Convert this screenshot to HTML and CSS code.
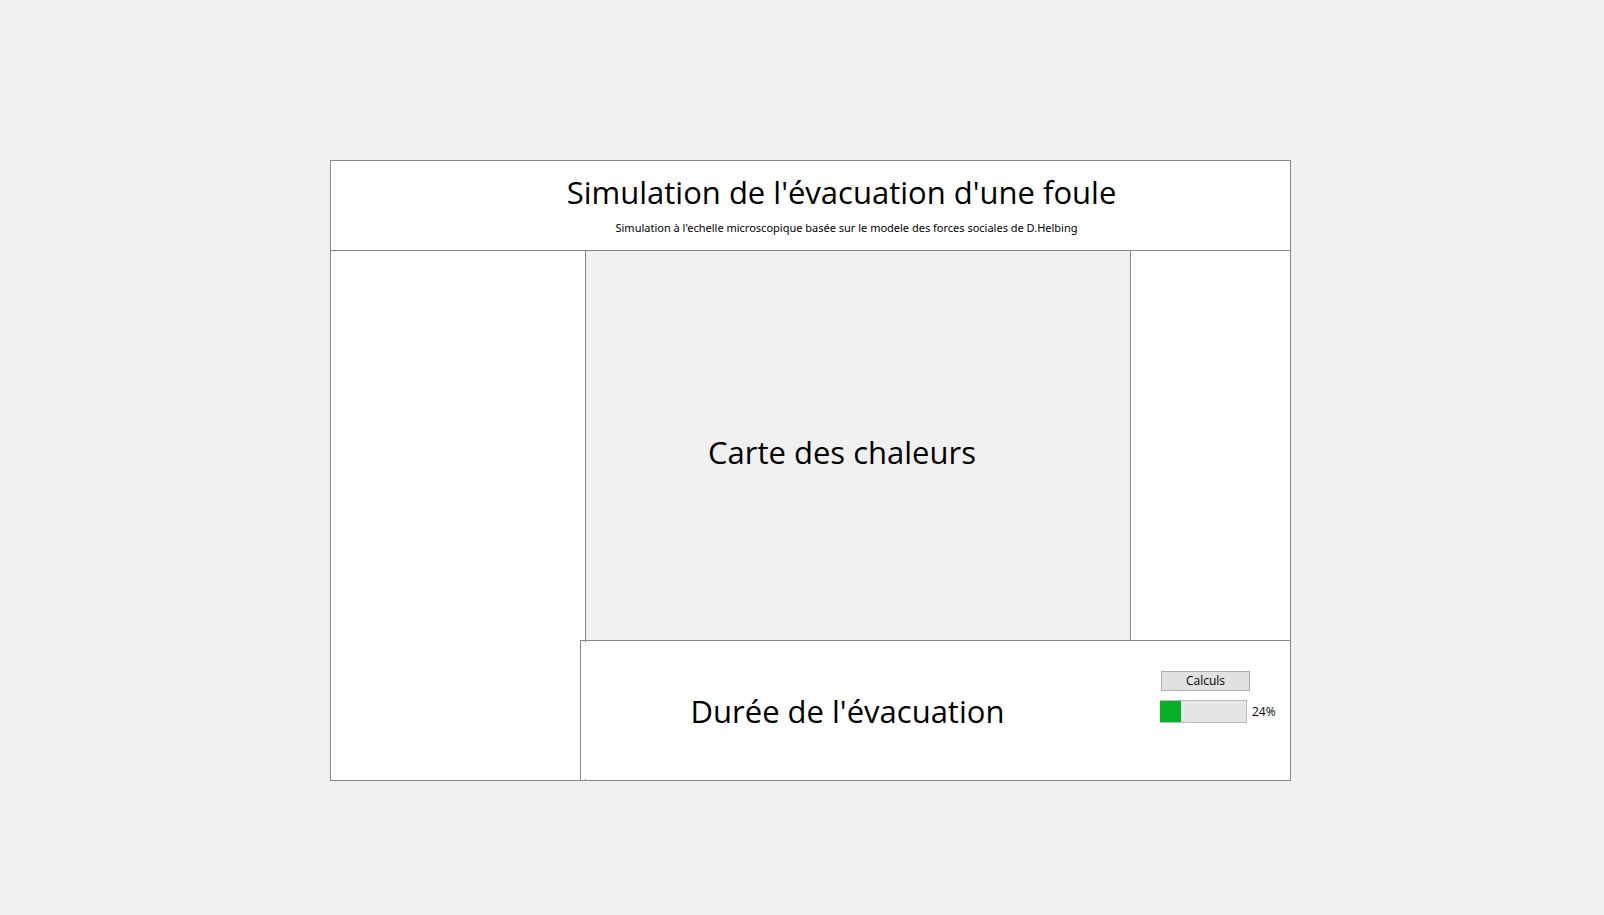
FILE: index.html
```html
<!DOCTYPE html>
<html lang="fr">
<head>
<meta charset="utf-8">
<title>Simulation de l'évacuation d'une foule</title>
<link rel="stylesheet" href="styles.css">
</head>
<body>
<main class="board">
  <header class="intro">
    <h1 class="title">Simulation de l'évacuation d'une foule</h1>
    <p class="subtitle">Simulation à l'echelle microscopique basée sur le modele des forces sociales de D.Helbing</p>
  </header>
  <aside class="side-left"></aside>
  <section class="map">
    <h2 class="title">Carte des chaleurs</h2>
  </section>
  <aside class="side-right"></aside>
  <section class="duration">
    <div class="duration-inner">
      <h2 class="title">Durée de l'évacuation</h2>
      <div class="controls">
        <button class="run" type="button">Calculs</button>
        <div class="meter">
          <progress class="bar" id="bar" value="24" max="100"></progress>
          <label class="percent" for="bar">24%</label>
        </div>
      </div>
    </div>
  </section>
</main>
</body>
</html>
```
FILE: styles.css
```css
* {
  box-sizing: border-box;
}

body {
  margin: 0;
  min-height: 100vh;
  padding: 160px 313px 134px 330px;
  display: flex;
  background: #f0f0f0;
  color: #000;
  font: 12px/16px "Open Sans", "Noto Sans", sans-serif;
}

.board {
  flex: 1;
  display: grid;
  grid-template-columns: 249px 6px 1fr 160px;
  grid-template-rows: 90px 1fr 140px;
  border: 1px solid #828790;
  background: #fff;
}

.title {
  margin: 0;
  font-size: 31px;
  line-height: 44px;
  font-weight: 370;
  white-space: nowrap;
}

.intro {
  grid-column: 1 / -1;
  display: flex;
  flex-direction: column;
  align-items: center;
  padding: 9px 0 0 62px;
  border-bottom: 1px solid #828790;
}

.subtitle {
  margin: 6px 0 0;
  padding-left: 10px;
  font-family: "Noto Sans", sans-serif;
  font-size: 11px;
  white-space: nowrap;
}

.side-left {
  grid-column: 1 / 3;
  grid-row: 2 / 4;
  border-right: 1px solid #828790;
}

.map {
  grid-column: 3;
  grid-row: 2;
  display: flex;
  align-items: center;
  justify-content: center;
  padding: 12px 32px 0 0;
  background: #f0f0f0;
}

.side-right {
  grid-column: 4;
  grid-row: 2;
  border-left: 1px solid #828790;
}

.duration {
  grid-column: 2 / 5;
  grid-row: 3;
  display: flex;
  padding: 1px 0;
  border: solid #828790;
  border-width: 1px 0 0 1px;
}

.duration-inner {
  flex: 1;
  display: flex;
  background: #fff;
}

.duration-inner .title {
  flex: 1;
  align-self: center;
  padding-right: 46px;
  text-align: center;
}

.controls {
  width: 130px;
  padding-top: 29px;
}

.run {
  display: block;
  width: 89px;
  height: 20px;
  margin: 0 0 9px 1px;
  padding: 0;
  border: 1px solid #adadad;
  background: #e1e1e1;
  color: #000;
  font: inherit;
  line-height: 18px;
}

.meter {
  display: flex;
  align-items: center;
  gap: 5px;
}

.bar {
  appearance: none;
  width: 87px;
  height: 23px;
  border: 1px solid #bcbcbc;
  border-left: 0;
  background: #e6e6e6;
}

.bar::-webkit-progress-bar {
  background: #e6e6e6;
}

.bar::-webkit-progress-value {
  background: #06b025;
}
```
